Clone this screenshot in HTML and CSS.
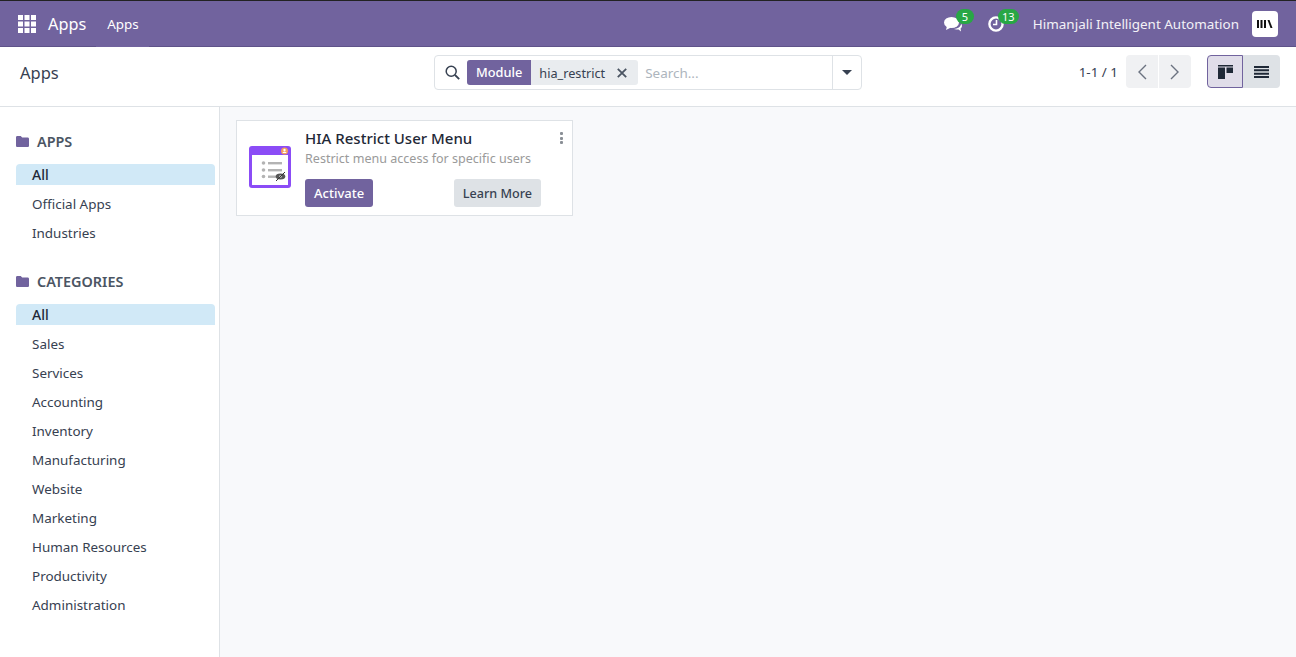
FILE: index.html
```html
<!DOCTYPE html>
<html lang="en">
<head>
    <meta charset="UTF-8">
    <title>Apps</title>
    <link rel="stylesheet" href="styles.css">
</head>
<body>
    <header class="navbar">
        <div class="nav-left">
            <svg class="grid-icon" width="18" height="18" viewBox="0 0 18 18">
                <path fill="#fff" d="M0 0h5v5H0zM6.5 0h5v5h-5zM13 0h5v5h-5zM0 6.500h5v5H0zM6.500 6.500h5v5h-5zM13 6.500h5v5h-5zM0 13h5v5H0zM6.500 13h5v5h-5zM13 13h5v5h-5z"/>
            </svg>
            <span class="brand">Apps</span>
            <a class="nav-link" href="#">Apps</a>
        </div>
        <div class="nav-right">
            <div class="systray-item">
                <svg width="19" height="16" viewBox="0 0 19 16">
                    <ellipse fill="#fff" cx="7.500" cy="6.500" rx="7.500" ry="5.500"/>
                    <path fill="#fff" d="M3 10l-1 4 5-2.500zM12.500 13.500c2 0 3-.3 4-1 1-.8 1.500-1.700 1.500-2.800 0-.7-.3-1.400-.8-2-.5 3-3.500 5-7.200 5.300.7.300 1.500.5 2.500.5zM14 13l3 2.500-.5-3.500z"/>
                </svg>
                <span class="badge badge-msg">5</span>
            </div>
            <div class="systray-item systray-clock">
                <svg width="16" height="16" viewBox="0 0 16 16">
                    <circle fill="none" stroke="#fff" stroke-width="2.400" cx="8" cy="8" r="6.600"/>
                    <path fill="none" stroke="#fff" stroke-width="1.600" d="M8.500 4v4.500H5"/>
                </svg>
                <span class="badge badge-clock">13</span>
            </div>
            <span class="company">Himanjali Intelligent Automation</span>
            <div class="avatar">
                <svg width="16" height="8" viewBox="0 0 16 8">
                    <path fill="#111" d="M0 0h2v8H0zM3.500 0h2v8h-2zM7 0h2v8H7zM10.500 0h2l3 8h-2z"/>
                </svg>
            </div>
        </div>
    </header>

    <section class="control-panel">
        <div class="breadcrumb">Apps</div>
        <div class="search-box">
            <div class="search-main">
                <svg class="search-icon" width="15" height="15" viewBox="0 0 15 15">
                    <circle fill="none" stroke="#374151" stroke-width="1.500" cx="6.200" cy="6.200" r="5"/>
                    <path stroke="#374151" stroke-width="1.800" d="M10 10l4.200 4.200"/>
                </svg>
                <div class="facet">
                    <span class="facet-label">Module</span>
                    <span class="facet-value">hia_restrict</span>
                    <svg class="facet-close" width="10" height="10" viewBox="0 0 10 10">
                        <path stroke="#4b5563" stroke-width="1.800" d="M.8.8l8.400 8.400M9.200.8L.8 9.200"/>
                    </svg>
                </div>
                <span class="search-placeholder">Search...</span>
            </div>
            <div class="search-toggle"><span class="caret"></span></div>
        </div>
        <div class="panel-right">
            <span class="pager-text">1-1 / 1</span>
            <div class="pager-buttons">
                <button class="pager-btn">
                    <svg width="10" height="16" viewBox="0 0 10 16"><path fill="none" stroke="#6b7280" stroke-width="1.400" d="M9 1L2 8l7 7"/></svg>
                </button>
                <button class="pager-btn">
                    <svg width="10" height="16" viewBox="0 0 10 16"><path fill="none" stroke="#6b7280" stroke-width="1.400" d="M1 1l7 7-7 7"/></svg>
                </button>
            </div>
            <div class="view-switch">
                <button class="view-btn view-btn-active">
                    <svg width="15" height="14" viewBox="0 0 15 14"><path fill="#1f2937" d="M0 0h15v1.500H0zM0 2.500h7V14H0zM8.500 2.500H15V8H8.500z"/></svg>
                </button>
                <button class="view-btn">
                    <svg width="15" height="12" viewBox="0 0 15 12"><path fill="#1f2937" d="M0 0h15v2H0zM0 3.300h15v2H0zM0 6.700h15v2H0zM0 10h15v2H0z"/></svg>
                </button>
            </div>
        </div>
    </section>

    <main class="content">
        <aside class="sidebar">
            <div class="side-section">
                <h3 class="side-title">
                    <svg width="13" height="11" viewBox="0 0 13 11"><path fill="#71639e" d="M1.300 0h3.400l1.500 1.500h5.500c.7 0 1.300.6 1.300 1.300v6.900c0 .7-.6 1.300-1.300 1.300H1.300C.6 11 0 10.400 0 9.700V1.300C0 .6.600 0 1.300 0z"/></svg>
                    APPS
                </h3>
                <a class="side-item side-item-active" href="#">All</a>
                <a class="side-item" href="#">Official Apps</a>
                <a class="side-item" href="#">Industries</a>
            </div>
            <div class="side-section">
                <h3 class="side-title">
                    <svg width="13" height="11" viewBox="0 0 13 11"><path fill="#71639e" d="M1.300 0h3.400l1.500 1.500h5.500c.7 0 1.300.6 1.300 1.300v6.900c0 .7-.6 1.300-1.300 1.300H1.300C.6 11 0 10.400 0 9.700V1.300C0 .6.600 0 1.300 0z"/></svg>
                    CATEGORIES
                </h3>
                <a class="side-item side-item-active" href="#">All</a>
                <a class="side-item" href="#">Sales</a>
                <a class="side-item" href="#">Services</a>
                <a class="side-item" href="#">Accounting</a>
                <a class="side-item" href="#">Inventory</a>
                <a class="side-item" href="#">Manufacturing</a>
                <a class="side-item" href="#">Website</a>
                <a class="side-item" href="#">Marketing</a>
                <a class="side-item" href="#">Human Resources</a>
                <a class="side-item" href="#">Productivity</a>
                <a class="side-item" href="#">Administration</a>
            </div>
        </aside>

        <div class="kanban">
            <article class="card">
                <svg class="card-icon" width="42" height="42" viewBox="0 0 42 42">
                    <rect width="42" height="42" rx="3" fill="#8b4cf6"/>
                    <rect x="3" y="9" width="36" height="30" fill="#fff"/>
                    <circle cx="35.500" cy="5" r="3.500" fill="#f59e5b"/>
                    <circle cx="35.500" cy="4" r="1.200" fill="#fff"/>
                    <path fill="#fff" d="M33.500 7a2 1.600 0 014 0z"/>
                    <g fill="#b3b3b3">
                        <circle cx="14.500" cy="17" r="1.800"/>
                        <circle cx="14.500" cy="24" r="1.800"/>
                        <circle cx="14.500" cy="30.500" r="1.800"/>
                        <rect x="19" y="16" width="14" height="2.400"/>
                        <rect x="19" y="23" width="14" height="2.400"/>
                        <rect x="19" y="29.500" width="9" height="2.400"/>
                    </g>
                    <ellipse cx="31.500" cy="30.500" rx="4.800" ry="3" fill="#555"/>
                    <circle cx="31.500" cy="30.500" r="1.300" fill="#ccc"/>
                    <path stroke="#333" stroke-width="1" d="M27 35l9-9"/>
                </svg>
                <div class="card-body">
                    <h4 class="card-title">HIA Restrict User Menu</h4>
                    <p class="card-desc">Restrict menu access for specific users</p>
                    <div class="card-actions">
                        <button class="btn btn-primary">Activate</button>
                        <button class="btn btn-secondary">Learn More</button>
                    </div>
                </div>
                <span class="card-menu"><i></i><i></i><i></i></span>
            </article>
        </div>
    </main>
</body>
</html>
```

FILE: styles.css
```css
* {
    box-sizing: border-box;
}

html, body {
    height: 100%;
}

body {
    margin: 0;
    display: flex;
    flex-direction: column;
    overflow: hidden;
    font-family: "Noto Sans", "Open Sans", sans-serif;
    font-size: 13.45px;
    color: #374151;
    background-color: #fff;
}

button {
    font-family: inherit;
    border: 0;
    padding: 0;
}

a {
    text-decoration: none;
    color: inherit;
}

/* top bar */
.navbar {
    height: 47px;
    flex: none;
    display: flex;
    justify-content: space-between;
    align-items: center;
    border-top: 1px solid #222;
    border-bottom: 1px solid #5f5389;
    background-color: #71639e;
    color: #fff;
}

.nav-left {
    align-self: stretch;
    display: flex;
    align-items: center;
    padding-left: 18px;
}

.brand {
    margin-left: 12px;
    font-size: 16.3px;
}

.nav-link {
    align-self: stretch;
    display: flex;
    align-items: center;
    margin: 0 0 -1px 10px;
    padding: 0 10px 0 11px;
    border-bottom: 1px solid #71639e;
}

.nav-right {
    display: flex;
    align-items: center;
    padding-right: 18px;
}

.systray-item {
    position: relative;
    display: flex;
    align-items: center;
    margin-right: 25px;
}

.systray-clock {
    margin-right: 29px;
}

.badge {
    position: absolute;
    top: -7px;
    height: 15px;
    border-radius: 8px;
    background-color: #28a745;
    color: #fff;
    font-size: 11px;
    line-height: 15px;
    text-align: center;
}

.badge-msg {
    left: 12px;
    width: 18px;
}

.badge-clock {
    left: 10px;
    width: 21px;
}

.company {
    color: #f3f1f7;
}

.avatar {
    width: 26px;
    height: 26px;
    margin-left: 13px;
    display: flex;
    align-items: center;
    justify-content: center;
    border-radius: 4px;
    background-color: #fff;
}

/* control panel */
.control-panel {
    height: 60px;
    flex: none;
    position: relative;
    display: flex;
    align-items: flex-start;
    padding: 8px 16px 0 20px;
    border-bottom: 1px solid #dee2e6;
    background-color: #fff;
}

.breadcrumb {
    width: 414px;
    flex: none;
    margin-top: 6px;
    font-size: 16.5px;
    color: #374151;
}

.search-box {
    width: 428px;
    height: 35px;
    flex: none;
    display: flex;
    border: 1px solid #dee2e6;
    border-radius: 4px;
}

.search-main {
    flex: 1;
    display: flex;
    align-items: center;
    padding-left: 10px;
}

.search-icon {
    flex: none;
}

.facet {
    height: 25px;
    margin-left: 7px;
    display: flex;
    align-items: center;
    border-radius: 3px;
    background-color: #e9ecef;
}

.facet-label {
    height: 25px;
    padding: 0 9px;
    line-height: 25px;
    font-size: 12.8px;
    font-weight: 500;
    color: #fff;
    background-color: #71639e;
    border-radius: 3px 0 0 3px;
}

.facet-value {
    padding-left: 8px;
    font-size: 12.7px;
}

.facet-close {
    margin: 0 11px 0 12px;
}

.search-placeholder {
    margin-left: 7px;
    color: #adb5bd;
}

.search-toggle {
    width: 29px;
    display: flex;
    align-items: center;
    justify-content: center;
    border-left: 1px solid #dee2e6;
}

.caret {
    border-top: 5px solid #374151;
    border-left: 5px solid transparent;
    border-right: 5px solid transparent;
}

.panel-right {
    flex: 1;
    display: flex;
    justify-content: flex-end;
    align-items: flex-start;
}

.pager-text {
    margin-top: 8px;
    margin-right: 8px;
}

.pager-buttons {
    display: flex;
    gap: 1px;
    margin-right: 16px;
}

.pager-btn {
    width: 32px;
    height: 33px;
    display: flex;
    align-items: center;
    justify-content: center;
    background-color: #f0f1f3;
    border-radius: 4px 0 0 4px;
}

.pager-btn + .pager-btn {
    border-radius: 0 4px 4px 0;
}

.view-switch {
    display: flex;
}

.view-btn {
    width: 37px;
    height: 33px;
    display: flex;
    align-items: center;
    justify-content: center;
    background-color: #dee2e6;
    border-radius: 0 4px 4px 0;
}

.view-btn-active {
    width: 36px;
    background-color: #e0dde9;
    border: 1px solid #71639e;
    border-radius: 4px 0 0 4px;
}

/* main area */
.content {
    flex: 1;
    min-height: 0;
    display: flex;
    background-color: #f8f9fb;
}

.sidebar {
    width: 220px;
    flex: none;
    padding: 24px 4px 0 16px;
    border-right: 1px solid #dee2e6;
    background-color: #fff;
}

.side-section + .side-section {
    margin-top: 28px;
}

.side-title {
    display: flex;
    align-items: center;
    gap: 8px;
    height: 20px;
    margin: 0 0 13px;
    font-size: 14.4px;
    font-weight: 600;
    color: #4b5563;
}

.side-item {
    display: block;
    height: 21px;
    padding-left: 16px;
    margin-bottom: 8px;
    line-height: 22px;
    color: #374151;
}

.side-item-active {
    font-size: 14px;
    font-weight: 500;
    line-height: 21px;
    color: #1f2937;
    background-color: #d1e9f7;
    border-radius: 4px 4px 0 0;
}

.kanban {
    flex: 1;
    padding: 13px 16px;
}

.card {
    width: 337px;
    height: 96px;
    position: relative;
    display: flex;
    align-items: flex-start;
    padding: 7px 12px;
    border: 1px solid #dee2e6;
    background-color: #fff;
}

.card-icon {
    flex: none;
    margin-top: 18px;
}

.card-body {
    flex: 1;
    margin-left: 14px;
    margin-right: 19px;
}

.card-title {
    margin: 0;
    font-size: 15px;
    font-weight: 500;
    line-height: 20px;
    color: #1f2937;
}

.card-desc {
    margin: 0;
    font-size: 12.55px;
    line-height: 21px;
    color: #9a9a9a;
}

.card-actions {
    display: flex;
    justify-content: space-between;
    margin-top: 10px;
}

.btn {
    height: 28px;
    padding: 0 9px;
    font-size: 12.6px;
    font-weight: 500;
    border-radius: 3px;
}

.btn-primary {
    font-size: 13px;
    color: #fff;
    background-color: #71639e;
}

.btn-secondary {
    color: #374151;
    background-color: #dee2e6;
}

.card-menu {
    position: absolute;
    top: 11px;
    right: 9px;
    display: flex;
    flex-direction: column;
    gap: 1.500px;
}

.card-menu i {
    display: block;
    width: 3.500px;
    height: 3px;
    background-color: #8a8f96;
    border-radius: 1px;
}
```
